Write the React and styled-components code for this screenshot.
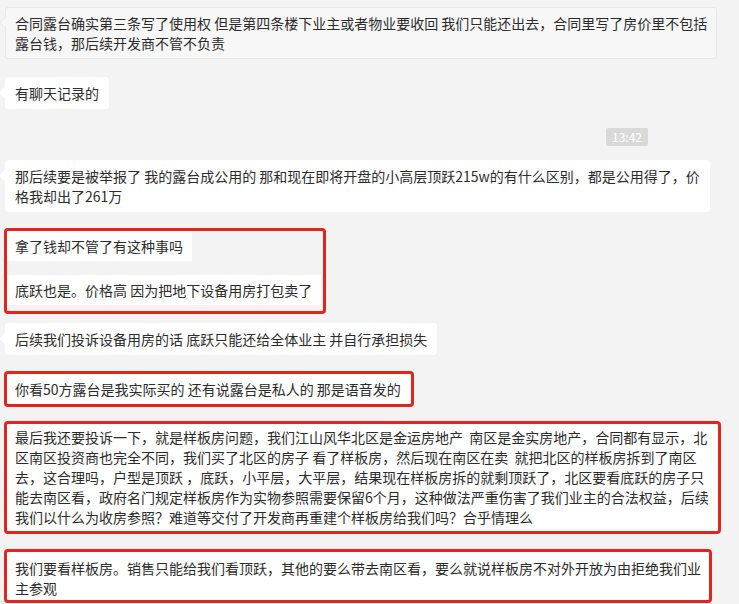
import React from 'react'
import styled, { createGlobalStyle } from 'styled-components'

const GlobalStyle = createGlobalStyle`
  html, body {
    margin: 0;
    padding: 0;
    overflow: hidden;
    background: #f3f3f3;
  }
  body {
    font-family: "Noto Sans CJK SC", "Liberation Sans", sans-serif;
  }
`

const Chat = styled.div`
  display: flex;
  flex-direction: column;
  align-items: flex-start;
  width: 739px;
  height: 604px;
  box-sizing: border-box;
  padding: 7px 0 0 5px;
  overflow: hidden;
`

const textStyle = `
  font-size: 14px;
  line-height: 20px;
  color: #2b2b2b;
  white-space: pre;
`

const Bubble = styled.div`
  ${textStyle}
  position: relative;
  margin-top: ${(p) => p.$top || 0}px;
  background: ${(p) => (p.$hover ? '#f7f7f7' : '#ffffff')};
  border: 1px solid ${(p) => (p.$hover ? '#e7e7e7' : '#ffffff')};
  border-radius: 3px;
  padding: 5px 9px;

  &::before {
    content: '';
    position: absolute;
    left: -5px;
    top: 10px;
    width: 8px;
    height: 8px;
    background: ${(p) => (p.$hover ? '#f7f7f7' : '#ffffff')};
    border-left: 1px solid ${(p) => (p.$hover ? '#e7e7e7' : '#ffffff')};
    border-bottom: 1px solid ${(p) => (p.$hover ? '#e7e7e7' : '#ffffff')};
    transform: rotate(45deg);
  }
`

const TimeStamp = styled.div`
  align-self: flex-end;
  margin: ${(p) => p.$top}px 91px 0 0;
  padding: 0 6px;
  background: #d9d9d9;
  border-radius: 2px;
  color: #ffffff;
  font-size: 12px;
  line-height: 18px;
`

const MarkedGroup = styled.div`
  display: flex;
  flex-direction: column;
  align-items: flex-start;
  gap: 14px;
  margin: ${(p) => p.$top}px 0 0 -1px;
  padding: 0 2px 6px 0;
  border: 3px solid #e3241d;
  border-radius: 4px;
`

const GroupBubble = styled.div`
  ${textStyle}
  background: #ffffff;
  padding: 5px 9px 5px 8px;
`

const Marked = styled.div`
  ${textStyle}
  margin: ${(p) => p.$top}px 0 0 -1px;
  padding: ${(p) => p.$pad};
  background: #ffffff;
  border: 3px solid #e3241d;
  border-radius: 4px;
`

const Lines = ({ lines }) =>
  lines.map((line, i) => (
    <React.Fragment key={i}>
      {i > 0 && <br />}
      {line}
    </React.Fragment>
  ))

export default function App() {
  return (
    <>
      <GlobalStyle />
      <Chat>
        <Bubble $hover>
          <Lines
            lines={[
              '合同露台确实第三条写了使用权 但是第四条楼下业主或者物业要收回 我们只能还出去，合同里写了房价里不包括',
              '露台钱，那后续开发商不管不负责',
            ]}
          />
        </Bubble>
        <Bubble $top={18}>有聊天记录的</Bubble>
        <TimeStamp $top={19}>13:42</TimeStamp>
        <Bubble $top={14}>
          <Lines
            lines={[
              '那后续要是被举报了 我的露台成公用的 那和现在即将开盘的小高层顶跃215w的有什么区别，都是公用得了，价',
              '格我却出了261万',
            ]}
          />
        </Bubble>
        <MarkedGroup $top={16}>
          <GroupBubble>拿了钱却不管了有这种事吗</GroupBubble>
          <GroupBubble>底跃也是。价格高 因为把地下设备用房打包卖了</GroupBubble>
        </MarkedGroup>
        <Bubble $top={9}>后续我们投诉设备用房的话 底跃只能还给全体业主 并自行承担损失</Bubble>
        <Marked $top={16} $pad="5px 10px 5px 8px">
          你看50方露台是我实际买的 还有说露台是私人的 那是语音发的
        </Marked>
        <Marked $top={14} $pad="3px 9px 4px 8px">
          <Lines
            lines={[
              '最后我还要投诉一下，就是样板房问题，我们江山风华北区是金运房地产  南区是金实房地产，合同都有显示，北',
              '区南区投资商也完全不同，我们买了北区的房子 看了样板房，然后现在南区在卖  就把北区的样板房拆到了南区',
              '去，这合理吗，户型是顶跃 ，底跃，小平层，大平层，结果现在样板房拆的就剩顶跃了，北区要看底跃的房子只',
              '能去南区看，政府名门规定样板房作为实物参照需要保留6个月，这种做法严重伤害了我们业主的合法权益，后续',
              '我们以什么为收房参照？难道等交付了开发商再重建个样板房给我们吗？合乎情理么',
            ]}
          />
        </Marked>
        <Marked $top={15} $pad="6px 8px 2px 8px">
          <Lines
            lines={[
              '我们要看样板房。销售只能给我们看顶跃，其他的要么带去南区看，要么就说样板房不对外开放为由拒绝我们业',
              '主参观',
            ]}
          />
        </Marked>
      </Chat>
    </>
  )
}
